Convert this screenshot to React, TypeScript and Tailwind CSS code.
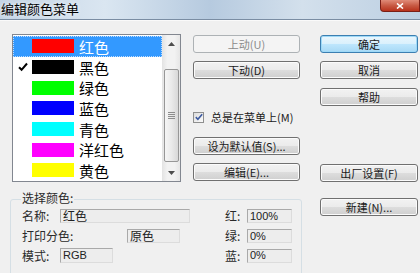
import React from 'react';

interface ColorItem {
  name: string;
  swatch: string;
  checked?: boolean;
  selected?: boolean;
}

const COLORS: ColorItem[] = [
  { name: '红色', swatch: 'bg-[#ff0000]', selected: true },
  { name: '黑色', swatch: 'bg-[#000000]', checked: true },
  { name: '绿色', swatch: 'bg-[#00ff00]' },
  { name: '蓝色', swatch: 'bg-[#0000ff]' },
  { name: '青色', swatch: 'bg-[#00ffff]' },
  { name: '洋红色', swatch: 'bg-[#ff00ff]' },
  { name: '黄色', swatch: 'bg-[#ffff00]' },
];

const FONT = "font-['Noto_Sans_CJK_SC','Noto_Sans',sans-serif]";

function Button({ label, primary, disabled, className = '' }: { label: string; primary?: boolean; disabled?: boolean; className?: string }) {
  const look = disabled
    ? 'border-[#adb2b5] bg-[#f4f4f4] text-[#8a8a8a]'
    : primary
      ? 'border-[#3c7fb1] bg-[linear-gradient(180deg,#eaf6fd_0%,#d9f0fc_50%,#bee6fd_51%,#a7d9f5_100%)] text-[#1a1a1a] shadow-[inset_0_0_0_1px_#9ed9f7]'
      : 'border-[#707070] bg-[linear-gradient(180deg,#f2f2f2_0%,#ebebeb_50%,#dddddd_51%,#cfcfcf_100%)] text-[#1a1a1a] shadow-[inset_0_0_0_1px_#fbfbfb]';
  return (
    <div className={`h-[18px] rounded-[3px] border flex items-center justify-center text-[11px] leading-none ${look} ${className}`}>
      {label}
    </div>
  );
}

function Field({ value, className = '' }: { value: string; className?: string }) {
  return (
    <div className={`h-[14px] border border-[#a9a9a9] border-r-[#dcdcdc] border-b-[#dcdcdc] bg-[#ededed] pl-[2px] flex items-center text-[11px] leading-none text-[#222] ${className}`}>
      {value}
    </div>
  );
}

function Check({ className = '' }: { className?: string }) {
  return (
    <svg viewBox="0 0 10 10" className={className}>
      <path d="M1 5.2 L3.6 7.8 L9 1.5" fill="none" stroke="currentColor" strokeWidth="2" />
    </svg>
  );
}

export default function App() {
  return (
    <div className={`relative w-[420px] h-[273px] overflow-hidden bg-[#f0f0f0] ${FONT}`}>

      {/* Title bar */}
      <div className="h-[19px] flex items-start justify-between bg-[linear-gradient(90deg,#c4d4e5_0%,#dae6f1_25%,#b6cadf_50%,#d3e0ec_72%,#bccfe2_100%)]">
        <span className="ml-[1px] text-[13px] leading-[17px] text-black [text-shadow:0_0_4px_#fff]">编辑颜色菜单</span>
        <div className="w-[40px] h-[12px] rounded-bl-[4px] border border-t-0 border-[#7a1e16] bg-[linear-gradient(180deg,#e08b78_0%,#c85a44_50%,#b8321c_100%)] flex items-center justify-center">
          <svg viewBox="0 0 8 6" className="w-[8px] h-[6px]">
            <path d="M1 0.5 L7 5.5 M7 0.5 L1 5.5" stroke="#fff" strokeWidth="1.6" />
          </svg>
        </div>
      </div>
      <div className="h-px bg-[#7a8da3]" />
      <div className="h-px bg-[#fafafa]" />

      <div className="flex pt-[13px]">
        {/* Left section */}
        <div className="ml-[10px] w-[292px]">
          <div className="flex ml-[2px]">

            {/* Color list */}
            <div className="w-[169px] h-[148px] border border-[#828790] bg-white flex">
              <div className="w-[149px] pt-px">
                {COLORS.map((c) => (
                  <div
                    key={c.name}
                    className={`h-[20.7px] flex items-center border ${c.selected ? 'bg-[#3399ff] border-dotted border-[#bcdcff] text-white' : 'border-transparent text-black'}`}
                  >
                    <div className="w-[18px] flex justify-center">
                      {c.checked && <Check className="w-[10px] h-[10px] text-black" />}
                    </div>
                    <div className={`w-[42px] h-[14px] ${c.swatch}`} />
                    <span className="ml-[5px] text-[15px] leading-none">{c.name}</span>
                  </div>
                ))}
              </div>

              {/* Scrollbar */}
              <div className="w-[18px] flex flex-col bg-[linear-gradient(90deg,#e3e3e3_0%,#f2f2f2_30%,#f2f2f2_70%,#e6e6e6_100%)]">
                <div className="h-[17px] flex items-center justify-center">
                  <svg viewBox="0 0 7 4" className="w-[7px] h-[4px]"><path d="M3.5 0 L7 4 L0 4 Z" fill="#4d4d4d" /></svg>
                </div>
                <div className="flex-1 pt-[17px]">
                  <div className="mx-auto w-[15px] h-[93px] rounded-[2px] border border-[#979797] bg-[linear-gradient(90deg,#f5f5f5_0%,#eaeaea_50%,#d8d8d8_100%)] flex flex-col items-center justify-center gap-[1px]">
                    {[0, 1, 2, 3].map((i) => (
                      <div key={i} className="w-[7px] h-px bg-[#8d8d8d]" />
                    ))}
                  </div>
                </div>
                <div className="h-[17px] flex items-center justify-center">
                  <svg viewBox="0 0 7 4" className="w-[7px] h-[4px]"><path d="M0 0 L7 0 L3.5 4 Z" fill="#4d4d4d" /></svg>
                </div>
              </div>
            </div>

            {/* Middle buttons */}
            <div className="ml-[12px] w-[107px] pt-px">
              <Button label="上动(U)" disabled />
              <Button label="下动(D)" className="mt-[8px]" />
              <div className="mt-[32px] h-[12px] flex items-center">
                <div className="w-[11px] h-[11px] border border-[#8e8f8f] bg-[linear-gradient(135deg,#dcdcdc_0%,#fbfbfb_100%)] flex items-center justify-center">
                  <Check className="w-[8px] h-[8px] text-[#3c5aa0]" />
                </div>
                <span className="ml-[7px] text-[11px] leading-none text-[#1a1a1a]">总是在菜单上(M)</span>
              </div>
              <Button label="设为默认值(S)..." className="mt-[14px]" />
              <Button label="编辑(E)..." className="mt-[8px]" />
            </div>
          </div>

          {/* Group box */}
          <div className="relative mt-[17px] h-[90px] border border-[#d5dfe5] rounded-[3px] pl-[11px] pt-[9px] text-[12px] leading-none text-[#2a2a2a]">
            <span className="absolute -top-[8px] left-[10px] px-px bg-[#f0f0f0]">选择颜色:</span>
            <div className="flex items-center">
              <div className="w-[203px] flex items-center">
                <span className="w-[38px]">名称:</span>
                <Field value="红色" className="w-[130px] text-[12px]" />
              </div>
              <span className="w-[22px]">红:</span>
              <Field value="100%" className="w-[45px] font-['Liberation_Sans',sans-serif]" />
            </div>
            <div className="flex items-center mt-[6px]">
              <div className="w-[203px] flex items-center">
                <span className="w-[105px]">打印分色:</span>
                <Field value="原色" className="w-[53px] text-[12px]" />
              </div>
              <span className="w-[22px]">绿:</span>
              <Field value="0%" className="w-[45px] font-['Liberation_Sans',sans-serif]" />
            </div>
            <div className="flex items-center mt-[5px]">
              <div className="w-[203px] flex items-center">
                <span className="w-[38px]">模式:</span>
                <Field value="RGB" className="w-[53px] h-[15px] text-[10px] font-['Liberation_Sans',sans-serif]" />
              </div>
              <span className="w-[22px]">蓝:</span>
              <Field value="0%" className="w-[45px] font-['Liberation_Sans',sans-serif]" />
            </div>
          </div>
        </div>

        {/* Right buttons */}
        <div className="ml-[18px] w-[98px] pt-px">
          <Button label="确定" primary />
          <Button label="取消" className="mt-[8px]" />
          <Button label="帮助" className="mt-[9px]" />
          <Button label="出厂设置(F)" className="mt-[58px]" />
          <Button label="新建(N)..." className="mt-[16px]" />
        </div>
      </div>
    </div>
  );
}
